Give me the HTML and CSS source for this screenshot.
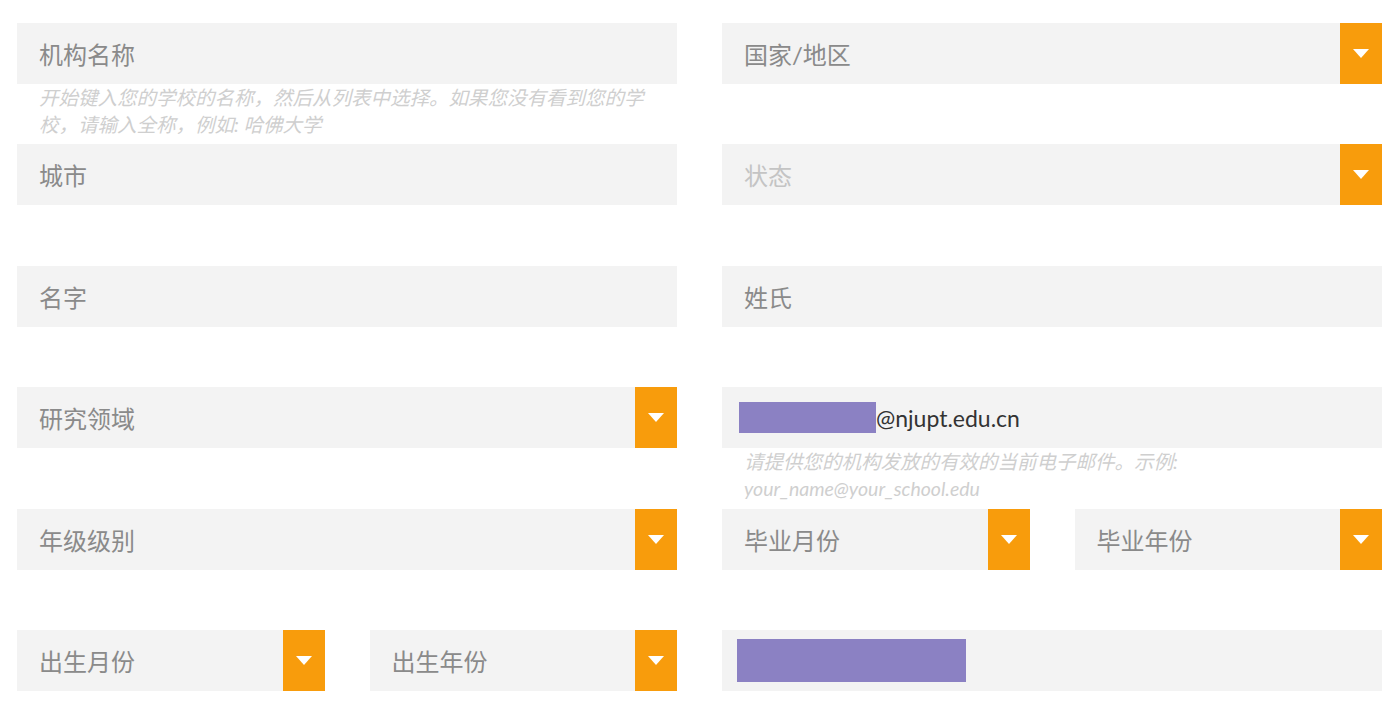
FILE: index.html
```html
<!DOCTYPE html>
<html lang="zh-CN">
<head>
<meta charset="utf-8">
<title>表单</title>
<link rel="stylesheet" href="styles.css">
</head>
<body>
<div class="form">
  <div class="cell">
    <div class="field"><span class="ph">机构名称</span></div>
    <p class="hint">开始键入您的学校的名称，然后从列表中选择。如果您没有看到您的学校，请输入全称，例如: 哈佛大学</p>
  </div>
  <div class="cell">
    <div class="field select"><span class="ph">国家/地区</span><span class="arrow"></span></div>
  </div>

  <div class="cell">
    <div class="field"><span class="ph">城市</span></div>
  </div>
  <div class="cell">
    <div class="field select"><span class="ph light">状态</span><span class="arrow"></span></div>
  </div>

  <div class="cell">
    <div class="field"><span class="ph">名字</span></div>
  </div>
  <div class="cell">
    <div class="field"><span class="ph">姓氏</span></div>
  </div>

  <div class="cell">
    <div class="field select"><span class="ph">研究领域</span><span class="arrow"></span></div>
  </div>
  <div class="cell">
    <div class="field email"><span class="mask mask-email"></span><span class="value">@njupt.edu.cn</span></div>
    <p class="hint">请提供您的机构发放的有效的当前电子邮件。示例: your_name@your_school.edu</p>
  </div>

  <div class="cell">
    <div class="field select"><span class="ph">年级级别</span><span class="arrow"></span></div>
  </div>
  <div class="cell split">
    <div class="field select"><span class="ph">毕业月份</span><span class="arrow"></span></div>
    <div class="field select"><span class="ph">毕业年份</span><span class="arrow"></span></div>
  </div>

  <div class="cell split">
    <div class="field select"><span class="ph">出生月份</span><span class="arrow"></span></div>
    <div class="field select"><span class="ph">出生年份</span><span class="arrow"></span></div>
  </div>
  <div class="cell">
    <div class="field masked"><span class="mask mask-wide"></span></div>
  </div>
</div>
</body>
</html>
```

FILE: styles.css
```css
html, body {
  margin: 0;
  padding: 0;
  background: #ffffff;
}

body {
  font-family: Lato, "Noto Sans CJK SC", sans-serif;
  width: 1400px;
  height: 708px;
  overflow: hidden;
}

.form {
  display: grid;
  grid-template-columns: 660px 660px;
  grid-template-rows: repeat(5, 121.4px) 61px;
  column-gap: 45px;
  padding: 23px 0 0 17px;
}

.cell {
  display: flex;
  flex-direction: column;
  min-width: 0;
}

.cell.split {
  flex-direction: row;
  gap: 45px;
}

.cell.split .field {
  flex: 1 1 0;
  min-width: 0;
}

.field {
  height: 61px;
  background: #f3f3f3;
  display: flex;
  align-items: center;
  padding-left: 22px;
  box-sizing: border-box;
  flex: none;
}

.ph {
  font-size: 24px;
  color: #8a8a8a;
  font-weight: 400;
  flex: 1 1 auto;
  white-space: nowrap;
}

.ph.light {
  color: #c4c4c4;
}

.arrow {
  flex: none;
  align-self: stretch;
  width: 42px;
  background: #f89c0c;
  display: flex;
  align-items: center;
  justify-content: center;
}

.arrow::after {
  content: "";
  width: 0;
  height: 0;
  border-left: 8.5px solid transparent;
  border-right: 8.5px solid transparent;
  border-top: 9px solid #ffffff;
}

.hint {
  margin: 0;
  padding: 0 23px 0 22px;
  font-size: 19.5px;
  line-height: 27px;
  font-style: italic;
  color: #cfcfcf;
}

.field.email {
  padding-left: 17px;
}

.value {
  font-size: 23px;
  color: #333333;
}

.mask {
  display: inline-block;
  background: #8b81c3;
  flex: none;
}

.mask-email {
  width: 137px;
  height: 31px;
}

.field.masked {
  padding-left: 15px;
}

.mask-wide {
  width: 229px;
  height: 43px;
}
```
